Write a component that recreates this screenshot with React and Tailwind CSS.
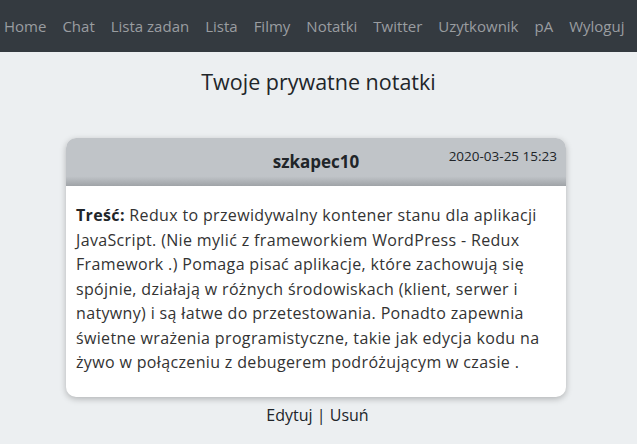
const links = ["Home", "Chat", "Lista zadan", "Lista", "Filmy", "Notatki", "Twitter", "Uzytkownik", "pA", "Wyloguj"];

const lines = [
  "Redux to przewidywalny kontener stanu dla aplikacji",
  "JavaScript. (Nie mylić z frameworkiem WordPress - Redux",
  "Framework .) Pomaga pisać aplikacje, które zachowują się",
  "spójnie, działają w różnych środowiskach (klient, serwer i",
  "natywny) i są łatwe do przetestowania. Ponadto zapewnia",
  "świetne wrażenia programistyczne, takie jak edycja kodu na",
  "żywo w połączeniu z debugerem podróżującym w czasie .",
];

export default function App() {
  return (
    <div className="min-h-[444px] bg-[#eceff1] text-[#212529]" style={{ fontFamily: '"Open Sans", "Noto Sans", sans-serif' }}>
      <nav className="h-[52px] bg-[#343a40] flex items-center px-[4px] gap-[16px] text-[15px] text-[#9a9da0] whitespace-nowrap overflow-hidden">
        {links.map((l) => (
          <span key={l}>{l}</span>
        ))}
      </nav>

      <h1 className="text-center text-[21.5px] mt-[15px] leading-[30px]">Twoje prywatne notatki</h1>

      <div className="w-[500px] ml-[66px] mt-[41px] rounded-[10px] bg-white shadow-[0_2px_6px_rgba(0,0,0,0.25)] overflow-hidden">
        <div className="relative h-[48px] bg-[linear-gradient(to_bottom,#c0c4c8_0%,#c0c4c8_80%,#9fa3a7_100%)] flex items-center justify-center">
          <span className="font-bold text-[17px]">szkapec10</span>
          <span className="absolute right-[9px] top-[8px] text-[13.5px]">2020-03-25 15:23</span>
        </div>
        <div className="px-[10px] pt-[17px] pb-[22px] text-[16px] leading-[24.5px] tracking-[0.35px] text-[#333] whitespace-nowrap">
          {lines.map((t, i) => (
            <div key={i}>
              {i === 0 && <b className="text-[#212529]">Treść: </b>}
              {t}
            </div>
          ))}
        </div>
      </div>

      <div className="text-center text-[16px] mt-[6px] -translate-x-[1px]">Edytuj | Usuń</div>
    </div>
  );
}
